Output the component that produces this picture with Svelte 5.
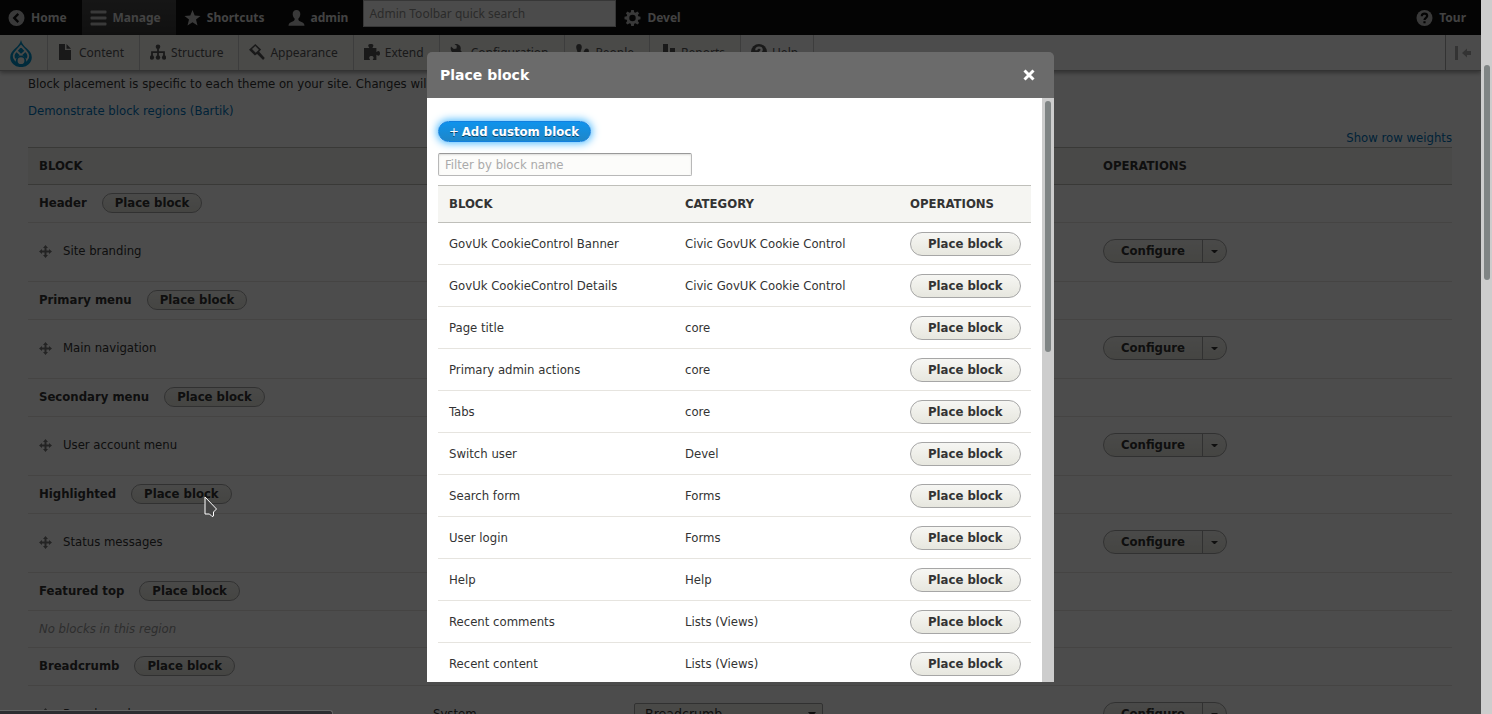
<script>
  const tabs = [
    { label: 'Home', icon: 'back' },
    { label: 'Manage', icon: 'menu', active: true },
    { label: 'Shortcuts', icon: 'star' },
    { label: 'admin', icon: 'user' },
  ]

  const trayLinks = [
    { label: 'Content', icon: 'file' },
    { label: 'Structure', icon: 'tree' },
    { label: 'Appearance', icon: 'brush' },
    { label: 'Extend', icon: 'puzzle' },
    { label: 'Configuration', icon: 'wrench' },
    { label: 'People', icon: 'people' },
    { label: 'Reports', icon: 'bars' },
    { label: 'Help', icon: 'help' },
  ]

  const regions = [
    { name: 'Header', block: 'Site branding' },
    { name: 'Primary menu', block: 'Main navigation' },
    { name: 'Secondary menu', block: 'User account menu' },
    { name: 'Highlighted', block: 'Status messages' },
    { name: 'Featured top' },
    { name: 'Breadcrumb', block: 'Breadcrumbs', category: 'System' },
  ]

  const blocks = [
    ['GovUk CookieControl Banner', 'Civic GovUK Cookie Control'],
    ['GovUk CookieControl Details', 'Civic GovUK Cookie Control'],
    ['Page title', 'core'],
    ['Primary admin actions', 'core'],
    ['Tabs', 'core'],
    ['Switch user', 'Devel'],
    ['Search form', 'Forms'],
    ['User login', 'Forms'],
    ['Help', 'Help'],
    ['Recent comments', 'Lists (Views)'],
    ['Recent content', 'Lists (Views)'],
  ]
</script>

{#snippet icon(name)}
  <svg class="icon" viewBox="0 0 16 16" aria-hidden="true">
    {#if name === 'back'}
      <path fill-rule="evenodd" d="M8 0a8 8 0 1 0 0 16A8 8 0 0 0 8 0zm2.6 11.2L9 12.9 4.1 8 9 3.1l1.6 1.7L7.400 8z" />
    {:else if name === 'menu'}
      <rect y="0.500" width="16" height="3" rx="1" /><rect y="6.500" width="16" height="3" rx="1" /><rect y="12.500" width="16" height="3" rx="1" />
    {:else if name === 'star'}
      <path d="M8 0l2.200 5.600 5.800.3-4.500 3.700 1.500 5.900L8 12.200 3 15.500l1.500-5.900L0 5.900l5.800-.3z" />
    {:else if name === 'user'}
      <path d="M8 0C5.500 0 4.100 1.700 4.200 4.300c.1 1.700.8 3.300 1.900 4.200.3 1.800-.3 2.200-2 2.900C1.700 12.300 0 13 0 15.800h16c0-2.800-1.700-3.500-4.100-4.400-1.700-.7-2.300-1.100-2-2.900 1.100-.9 1.800-2.500 1.900-4.200C11.900 1.700 10.500 0 8 0z" />
    {:else if name === 'gear'}
      <path fill-rule="evenodd" d="M6.700 0h2.600l.4 2.200 1.300.6L12.900 1.500l1.700 1.700-1.300 1.900.5 1.200 2.200.5v2.500l-2.200.5-.5 1.200 1.300 1.900-1.700 1.700-1.900-1.300-1.300.5L9.300 16H6.700l-.4-2.200-1.300-.5-1.900 1.300-1.700-1.700 1.300-1.900-.5-1.200L0 9.300V6.800l2.200-.5.5-1.200-1.300-1.900 1.700-1.700L5 2.800l1.300-.6zM8 4.800a3.200 3.200 0 1 0 0 6.400 3.200 3.200 0 0 0 0-6.400z" />
    {:else if name === 'help'}
      <circle cx="8" cy="8" r="8" />
      <path class="cut" d="M5.300 6.200C5.300 4.500 6.400 3.700 8 3.700s2.700.9 2.700 2.300C10.700 7.700 8 7.900 8 9.900M8 11.200v2" />
    {:else if name === 'file'}
      <path d="M1 0h6v6h6v10H1zM8.500 0L13 4.700H8.500z" />
    {:else if name === 'tree'}
      <circle cx="8" cy="2.800" r="2.300" /><circle cx="1.900" cy="13.500" r="2.200" /><circle cx="8" cy="13.500" r="2.200" /><circle cx="14.100" cy="13.500" r="2.200" />
      <path class="line" d="M8 4v9M2 12V8.200h12V12" />
    {:else if name === 'brush'}
      <path fill-rule="evenodd" d="M6.300 0l5.800 5.400-1.900 2.300 5.600 6.300-1.700 1.900-6-6-2.200 1.500L0 5.800zM3 5.100l3.700 3.700 3.200-3.100L6.300 2z" />
    {:else if name === 'puzzle'}
      <path d="M2.900 4h2.300c.2-.6-1-1.100-1-2.400C4.200.2 5.600 0 6.800 0s2.600.3 2.600 1.600c0 1.300-1 1.700-.9 2.400h3.900v4c.7.1.8-.9 1.900-.9 1.300 0 1.700 1.200 1.700 2.300s-.4 2.300-1.700 2.300c-1.100 0-1.200-1-1.900-.9V16H8.800c-.2-.9.8-1.100.8-2.200 0-1.200-.9-1.800-2.200-1.800S5.200 12.600 5.200 13.800c0 1.100 1 1.300.8 2.200H0V4z" />
    {:else if name === 'wrench'}
      <path d="M1 2.600l2.800 2.500 2.700-.5.300-2.800L4.500.3c3-.8 6.300 1 6.300 4.200l-.3 1.700 5 6.300c1 1.700-1.200 3.900-3 2.900L6.900 9.100C3.100 10.400-.4 6.800 1 2.600z" />
    {:else if name === 'people'}
      <path d="M4 0c2 0 3 1.600 2.800 3.500-.2 2-1.200 3-1.200 4.500 0 2 3 1.500 3 6H0c0-3.500 2.400-4 2.400-6 0-1.500-1.100-2.500-1.200-4.500C1 1.600 2 0 4 0zm7.500 4.500c1.700 0 2.600 1.300 2.400 3-.1 1.700-1.100 2.500-1.100 3.500 0 2 2.700 1.500 2.700 5H9.600c.2-4-1.600-5.200-1.600-6.700.8-1.100 1.400-4.800 3.500-4.800z" />
    {:else if name === 'bars'}
      <path d="M3 0h5v16H3zM10 4h5v12h-5z" />
    {/if}
  </svg>
{/snippet}

<div class="window">
  <div class="page">
    <nav class="bar">
      {#each tabs as tab}
        <a href="#top" class:active={tab.active}>{@render icon(tab.icon)}{tab.label}</a>
      {/each}
      <input type="text" aria-label="Quick search" placeholder="Admin Toolbar quick search" />
      <a href="#devel">{@render icon('gear')}Devel</a>
      <a class="tour" href="#tour">{@render icon('help')}Tour</a>
    </nav>

    <nav class="tray">
      <a class="drupal" href="#tools" aria-label="Tools">
        <svg viewBox="0 0 24 30" aria-hidden="true">
          <path class="drop" d="M12 0C11 4.500 8.300 6.700 5.700 9.300 2.600 12.300 0 15.100 0 19.100a12 11 0 0 0 24 0c0-4-2.600-6.800-5.700-9.800C15.700 6.700 13 4.500 12 0z" />
          <path class="stroke" d="M12 6.500L17 12 6 22.500C2.500 19 3.500 15.500 7 12zM7.500 12.500L18 22.500C21.500 19 20.500 15.500 17 12" />
          <circle class="ring" cx="12" cy="23" r="4.800" />
        </svg>
      </a>
      {#each trayLinks as link}
        <a href="#tray">{@render icon(link.icon)}{link.label}</a>
      {/each}
      <button class="orient" aria-label="Vertical orientation">
        <svg viewBox="0 0 16 14" aria-hidden="true"><path d="M0 0h3v14H0zM7 7l5-4.500V5h4v4h-4v2.500z" /></svg>
      </button>
    </nav>

    <main>
      <p>Block placement is specific to each theme on your site. Changes will not be saved until you click <em>Save blocks</em> at the bottom of the page.</p>
      <p><a href="#demo">Demonstrate block regions (Bartik)</a></p>
      <p class="weights"><a href="#weights">Show row weights</a></p>

      <table class="layout">
        <thead>
          <tr>
            <th class="name">Block</th>
            <th class="category">Category</th>
            <th class="region">Region</th>
            <th>Operations</th>
          </tr>
        </thead>
        <tbody>
          {#each regions as region}
            <tr class="title">
              <td colspan="4">
                <div class="heading">{region.name}<button class="pill small">Place block</button></div>
              </td>
            </tr>
            {#if region.block}
              <tr class="item">
                <td>
                  <div class="draggable">
                    <svg viewBox="0 0 13 13" aria-hidden="true">
                      <path d="M6.500 0L9 3H7.500v2.500H10V4l3 2.500L10 9V7.500H7.500V10H9l-2.500 3L4 10h1.500V7.500H3V9L0 6.500 3 4v1.500h2.500V3H4z" />
                    </svg>
                    {region.block}
                  </div>
                </td>
                <td>{region.category ?? 'System'}</td>
                <td>
                  <select aria-label="Region for {region.block}">
                    <option>{region.name}</option>
                  </select>
                </td>
                <td>
                  <div class="dropbutton">
                    <button>Configure</button>
                    <button class="toggle" aria-label="List additional actions"><i></i></button>
                  </div>
                </td>
              </tr>
            {:else}
              <tr class="empty"><td colspan="4">No blocks in this region</td></tr>
            {/if}
          {/each}
        </tbody>
      </table>
    </main>

    <div class="overlay"></div>

    <svg class="pointer" viewBox="0 0 14 22" aria-hidden="true">
      <path d="M1 1v17h4.500l2.500 2.500 1.500-.5v-4L12.500 13z" />
    </svg>

    <div class="modal" role="dialog" aria-labelledby="modal-title">
      <header>
        <h1 id="modal-title">Place block</h1>
        <button class="close" aria-label="Close">
          <svg viewBox="0 0 12 12" aria-hidden="true"><path d="M1.500 1.500l9 9M10.500 1.500l-9 9" /></svg>
        </button>
      </header>
      <div class="body">
        <div class="content">
          <button class="add"><span>+</span>Add custom block</button>
          <input type="search" aria-label="Filter" placeholder="Filter by block name" />
          <table class="list">
            <thead>
              <tr>
                <th class="name">Block</th>
                <th class="category">Category</th>
                <th>Operations</th>
              </tr>
            </thead>
            <tbody>
              {#each blocks as [name, category]}
                <tr>
                  <td>{name}</td>
                  <td>{category}</td>
                  <td><button class="pill">Place block</button></td>
                </tr>
              {/each}
            </tbody>
          </table>
        </div>
        <div class="track inner"><div class="thumb"></div></div>
      </div>
    </div>

    <div class="status"></div>
  </div>
  <div class="track outer"><div class="thumb"></div></div>
</div>

<style>
  :global(body) {
    margin: 0;
  }
  .window {
    display: flex;
    height: 100vh;
    overflow: hidden;
    font: 13px/20px 'DejaVu Sans Condensed', 'DejaVu Sans', sans-serif;
    color: #333;
    background: #fff;
  }
  .page {
    position: relative;
    flex: 1;
    min-width: 0;
    overflow: hidden;
  }
  a {
    color: #0074bd;
    text-decoration: none;
  }
  button,
  input,
  select {
    box-sizing: border-box;
    margin: 0;
    font: inherit;
    color: inherit;
  }
  svg {
    display: block;
    flex: none;
  }
  .icon {
    fill: currentColor;
  }
  .cut {
    fill: none;
    stroke: #0f0f0f;
    stroke-width: 2.2;
  }
  .line {
    fill: none;
    stroke: currentColor;
    stroke-width: 1.8;
  }

  /* toolbar */
  .bar,
  .tray {
    display: flex;
    font-family: 'Noto Sans', sans-serif;
    font-size: 12px;
  }
  .bar {
    height: 35px;
    font-weight: bold;
    background: #0f0f0f;
  }
  .bar a {
    display: flex;
    align-items: center;
    gap: 6px;
    padding: 0 15px 0 8px;
    color: #ddd;
  }
  .bar a.active {
    background: linear-gradient(#4b4b4b, #373737);
  }
  .bar .icon {
    width: 17px;
    height: 16px;
    color: #bebebe;
  }
  .bar input {
    width: 253px;
    height: 27px;
    padding: 0 5px;
    font-weight: normal;
    background: #fcfcfa;
    border: 1px solid #b8b8b8;
  }
  .bar input::placeholder {
    color: #8f8f8f;
  }
  .bar .tour {
    margin-left: auto;
  }
  .tray {
    position: relative;
    height: 36px;
    background: #fff;
    border-bottom: 1px solid #aaa;
    box-shadow: 0 2px 4px rgba(0, 0, 0, 0.35);
    box-sizing: border-box;
  }
  .tray a {
    display: flex;
    align-items: center;
    gap: 5px;
    padding: 0 15px 0 10px;
    color: #565656;
    background: #f7f7f2;
    border-right: 1px solid #ccc;
  }
  .tray a:last-of-type {
    background: #fff;
  }
  .tray .drupal {
    padding: 2px 15px 0 10px;
  }
  .drupal svg {
    width: 22px;
    height: 27px;
  }
  .drop {
    fill: #0091c9;
  }
  .stroke {
    fill: none;
    stroke: #f7f7f2;
    stroke-width: 2;
  }
  .ring {
    fill: #f7f7f2;
    stroke: #0091c9;
    stroke-width: 2;
  }
  .tray .icon {
    width: 16px;
    height: 16px;
    margin-bottom: 2px;
  }
  .tray .cut {
    stroke: #fff;
  }
  .orient {
    width: 36px;
    margin-left: auto;
    padding: 0 9px;
    background: #fafafa;
    border: 0;
    border-left: 1px solid #aaa;
  }
  .orient svg {
    width: 16px;
    height: 14px;
    fill: #aaa;
  }

  /* block layout page */
  main {
    padding: 3px 29px 0 28px;
  }
  main p {
    margin: 0 0 7px;
    height: 20px;
    overflow: hidden;
  }
  main p.weights {
    height: 19px;
    margin: 0;
    text-align: right;
  }
  table {
    width: 100%;
    table-layout: fixed;
    border-spacing: 0;
  }
  th,
  td {
    box-sizing: border-box;
    padding: 0 11px;
    text-align: left;
    vertical-align: middle;
    border-bottom: 1px solid #e6e4df;
  }
  th {
    height: 38px;
    text-transform: uppercase;
    background: #f5f5f2;
    border-top: 1px solid #bfbfba;
    border-bottom: 1px solid #bfbfba;
  }
  .layout .name {
    width: 394px;
  }
  .layout .category {
    width: 201px;
  }
  .layout .region {
    width: 469px;
  }
  .title td {
    height: 38px;
    padding-bottom: 1px;
    font-weight: bold;
  }
  .item td {
    height: 59px;
    padding-bottom: 2px;
  }
  .empty td {
    height: 37px;
    padding-bottom: 1px;
    font-style: italic;
    color: #999;
  }
  .heading {
    display: flex;
    align-items: center;
    gap: 15px;
  }
  .draggable {
    display: flex;
    align-items: center;
    gap: 11px;
  }
  .draggable svg {
    width: 13px;
    height: 13px;
    fill: #787878;
  }
  .pill {
    display: block;
    height: 24px;
    padding: 0 17px;
    line-height: 20px;
    font-weight: bold;
    background: linear-gradient(#f6f6f3, #e7e7df);
    border: 1px solid #a6a6a6;
    border-radius: 12px;
  }
  .pill.small {
    height: 20px;
    padding: 0 12px;
    line-height: 18px;
  }
  select {
    width: 189px;
    height: 22px;
    padding: 0 10px;
    font-size: 14px;
    appearance: none;
    background: #f3f3ee url("data:image/svg+xml,%3Csvg xmlns='http://www.w3.org/2000/svg' width='8' height='5'%3E%3Cpath d='M0 0h8L4 5z' fill='%23333'/%3E%3C/svg%3E") no-repeat right 6px center;
    border: 1px solid #a6a6a6;
    border-radius: 2px;
  }
  .dropbutton {
    display: inline-flex;
    height: 24px;
    box-sizing: border-box;
    background: linear-gradient(#f6f6f3, #e7e7df);
    border: 1px solid #a6a6a6;
    border-radius: 12px;
    vertical-align: middle;
  }
  .dropbutton button {
    padding: 0 17px;
    font-weight: bold;
    background: none;
    border: 0;
  }
  .dropbutton .toggle {
    width: 24px;
    padding: 0 8px;
    border-left: 1px solid #a6a6a6;
  }
  .toggle i {
    display: block;
    border: 3px solid transparent;
    border-top-color: #333;
    border-bottom: 0;
  }

  .overlay {
    position: absolute;
    inset: 0;
    background: rgba(0, 0, 0, 0.7);
  }
  .pointer {
    position: absolute;
    left: 204px;
    top: 496px;
    width: 14px;
    height: 22px;
    fill: #444;
    stroke: #fff;
  }
  .status {
    position: absolute;
    left: 0;
    bottom: 0;
    width: 333px;
    height: 4px;
    box-sizing: border-box;
    background: #2d2c30;
    border-top: 1px solid #666;
    border-right: 1px solid #666;
    border-radius: 0 3px 0 0;
  }

  /* dialog */
  .modal {
    position: absolute;
    top: 52px;
    bottom: 32px;
    left: 0;
    right: 0;
    display: flex;
    flex-direction: column;
    width: 627px;
    margin: 0 auto;
  }
  header {
    display: flex;
    align-items: center;
    justify-content: space-between;
    height: 46px;
    padding: 0 19px 0 13px;
    background: #6b6b6b;
    border-radius: 5px 5px 0 0;
  }
  h1 {
    margin: 0;
    font: bold 14px/20px 'DejaVu Sans', sans-serif;
    color: #fff;
  }
  .close {
    padding: 0;
    background: none;
    border: 0;
  }
  .close svg {
    width: 12px;
    height: 12px;
    fill: none;
    stroke: #fff;
    stroke-width: 3;
  }
  .body {
    display: flex;
    flex: 1;
    min-height: 0;
    background: #fff;
  }
  .content {
    flex: 1;
    padding: 23px 11px 0;
    overflow: hidden;
  }
  .content input {
    display: block;
    width: 254px;
    height: 23px;
    margin: 11px 0 9px;
    padding: 0 6px;
    background: #fcfcfa;
    border: 1px solid #b8b8b8;
    border-top-color: #999;
    border-radius: 2px;
    box-shadow: inset 0 1px 2px rgba(0, 0, 0, 0.125);
  }
  .content input::placeholder {
    color: #aaa;
  }
  .add {
    display: flex;
    gap: 3px;
    height: 21px;
    padding: 0 11px 0 10px;
    line-height: 19px;
    font-weight: bold;
    color: #fff;
    text-shadow: 0 1px rgba(0, 0, 0, 0.5);
    background: linear-gradient(#0f93ec, #1e86c8);
    border: 1px solid #1280df;
    border-radius: 11px;
    box-shadow: 0 0 8px 1px #40b6ff;
  }
  .add span {
    font-weight: normal;
  }
  .list .name {
    width: 236px;
  }
  .list .category {
    width: 225px;
  }
  .list td {
    height: 42px;
  }
  .list th:last-child,
  .list td:last-child {
    padding-right: 0;
  }

  .track {
    flex: none;
    box-sizing: border-box;
    width: 12px;
    padding: 3px 3px 0;
    background: #cdcdcd;
  }
  .thumb {
    height: 251px;
    background: #7f8484;
    border-radius: 3px;
  }
  .outer {
    width: 11px;
    padding: 65px 2px 0 3px;
  }
  .outer .thumb {
    height: 215px;
  }
</style>
